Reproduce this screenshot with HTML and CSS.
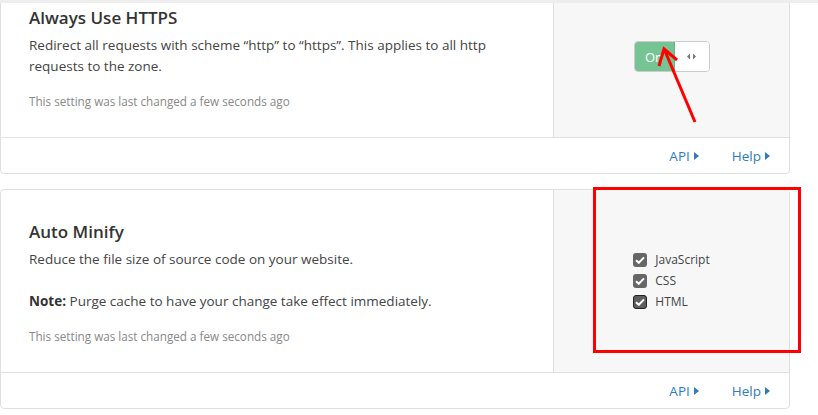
FILE: index.html
```html
<!DOCTYPE html>
<html lang="en">
<head>
    <meta charset="UTF-8">
    <title>Crypto settings</title>
    <link rel="stylesheet" href="styles.css">
</head>
<body>
    <div class="topline"></div>

    <div class="page">
        <!-- Always Use HTTPS -->
        <div class="card card-first">
            <div class="card-body">
                <div class="card-main">
                    <h3 class="card-title">Always Use HTTPS</h3>
                    <p class="card-text">Redirect all requests with scheme “http” to “https”. This applies to all http requests to the zone.</p>
                    <p class="card-changed">This setting was last changed a few seconds ago</p>
                </div>
                <div class="card-control">
                    <div class="toggle">
                        <span class="toggle-on">On</span>
                        <span class="toggle-handle">
                            <svg width="9" height="7" viewBox="0 0 9 7"><path d="M3 0.5 L0 3.5 L3 6.5 Z M6 0.5 L9 3.5 L6 6.5 Z" fill="#777"/></svg>
                        </span>
                    </div>
                </div>
            </div>
            <div class="card-footer">
                <a href="#" class="footer-link">API <span class="caret"></span></a>
                <a href="#" class="footer-link">Help <span class="caret"></span></a>
            </div>
        </div>

        <!-- Auto Minify -->
        <div class="card">
            <div class="card-body">
                <div class="card-main">
                    <h3 class="card-title">Auto Minify</h3>
                    <p class="card-text">Reduce the file size of source code on your website.</p>
                    <p class="card-text card-note"><b>Note:</b> Purge cache to have your change take effect immediately.</p>
                    <p class="card-changed">This setting was last changed a few seconds ago</p>
                </div>
                <div class="card-control">
                    <ul class="checklist">
                        <li><span class="check"><svg width="10" height="8" viewBox="0 0 10 8"><path d="M1 4.2 L3.8 6.8 L9 1.4" fill="none" stroke="#fff" stroke-width="2"/></svg></span>JavaScript</li>
                        <li><span class="check"><svg width="10" height="8" viewBox="0 0 10 8"><path d="M1 4.2 L3.8 6.8 L9 1.4" fill="none" stroke="#fff" stroke-width="2"/></svg></span>CSS</li>
                        <li><span class="check check-focus"><svg width="10" height="8" viewBox="0 0 10 8"><path d="M1 4.2 L3.8 6.8 L9 1.4" fill="none" stroke="#fff" stroke-width="2"/></svg></span>HTML</li>
                    </ul>
                </div>
            </div>
            <div class="card-footer">
                <a href="#" class="footer-link">API <span class="caret"></span></a>
                <a href="#" class="footer-link">Help <span class="caret"></span></a>
            </div>
        </div>
    </div>

    <!-- red annotations drawn over the screenshot -->
    <svg class="annotations" width="818" height="415" viewBox="0 0 818 415">
        <path d="M695 122 L665 51" stroke="#f00" stroke-width="3" fill="none"/>
        <path d="M659 66 L664 49 L677 60" stroke="#f00" stroke-width="3" fill="none"/>
        <rect x="594.5" y="188.5" width="205" height="163" stroke="#f00" stroke-width="3" fill="none"/>
    </svg>
</body>
</html>
```

FILE: styles.css
```css
/* General styles */
body {
    margin: 0;
    font-family: "Open Sans", Arial, sans-serif;
    background-color: #fff;
    color: #333;
    position: relative;
    overflow: hidden;
    height: 415px;
}

.topline {
    position: absolute;
    top: 0;
    left: 0;
    right: 0;
    height: 3px;
    background-color: #eee;
    z-index: 2;
}

.page {
    width: 790px;
    display: flex;
    flex-direction: column;
    gap: 15px;
}

/* Cards */
.card {
    border: 1px solid #e0e0e0;
    border-radius: 4px;
    background-color: #fff;
}

.card-first {
    margin-top: -25px;
}

.card-body {
    display: grid;
    grid-template-columns: 552px 1fr;
}

.card-main {
    padding: 30px 20px 28px 28px;
    display: flex;
    flex-direction: column;
    justify-content: center;
}

.card-title {
    margin: 0 0 5px;
    font-size: 17px;
    font-weight: 600;
    color: #333;
    line-height: 24px;
}

.card-text {
    margin: 0;
    font-size: 13.5px;
    line-height: 21px;
    color: #444;
}

.card-note {
    margin-top: 21px;
}

.card-note b {
    color: #333;
}

.card-changed {
    margin: 16px 0 0;
    font-size: 11.7px;
    line-height: 16px;
    color: #888;
}

.card-control {
    background-color: #f7f7f7;
    border-left: 1px solid #e0e0e0;
    display: flex;
    align-items: center;
    justify-content: center;
}

/* Toggle */
.toggle {
    display: flex;
    width: 76px;
    height: 31px;
    box-sizing: border-box;
    border: 1px solid #ccc;
    border-radius: 4px;
    overflow: hidden;
}

.toggle-on {
    width: 39px;
    background-color: #76c493;
    border-right: 1px solid #66b583;
    color: #fff;
    font-size: 13px;
    display: flex;
    align-items: center;
    justify-content: center;
}

.toggle-handle {
    flex: 1;
    background-color: #fff;
    display: flex;
    align-items: center;
    justify-content: center;
}

/* Checkboxes */
.checklist {
    list-style: none;
    margin: 0;
    padding: 0;
    display: flex;
    flex-direction: column;
    gap: 7px;
}

.checklist li {
    display: flex;
    align-items: center;
    gap: 8px;
    font-size: 12px;
    color: #444;
    line-height: 14px;
}

.check {
    width: 14px;
    height: 14px;
    box-sizing: border-box;
    border-radius: 3px;
    background-color: #666;
    display: flex;
    align-items: center;
    justify-content: center;
}

.check-focus {
    border: 1px solid #222;
    background-color: #5e5e5e;
}

/* Footer */
.card-footer {
    height: 35px;
    border-top: 1px solid #e0e0e0;
    display: flex;
    align-items: center;
    justify-content: flex-end;
    gap: 33px;
    padding-right: 19px;
}

.footer-link {
    color: #2f7bbf;
    text-decoration: none;
    font-size: 13.5px;
    display: flex;
    align-items: center;
    gap: 4px;
}

.caret {
    width: 0;
    height: 0;
    border-top: 4px solid transparent;
    border-bottom: 4px solid transparent;
    border-left: 5px solid #2f7bbf;
}

/* Annotations */
.annotations {
    position: absolute;
    top: 0;
    left: 0;
    pointer-events: none;
    z-index: 3;
}
```
